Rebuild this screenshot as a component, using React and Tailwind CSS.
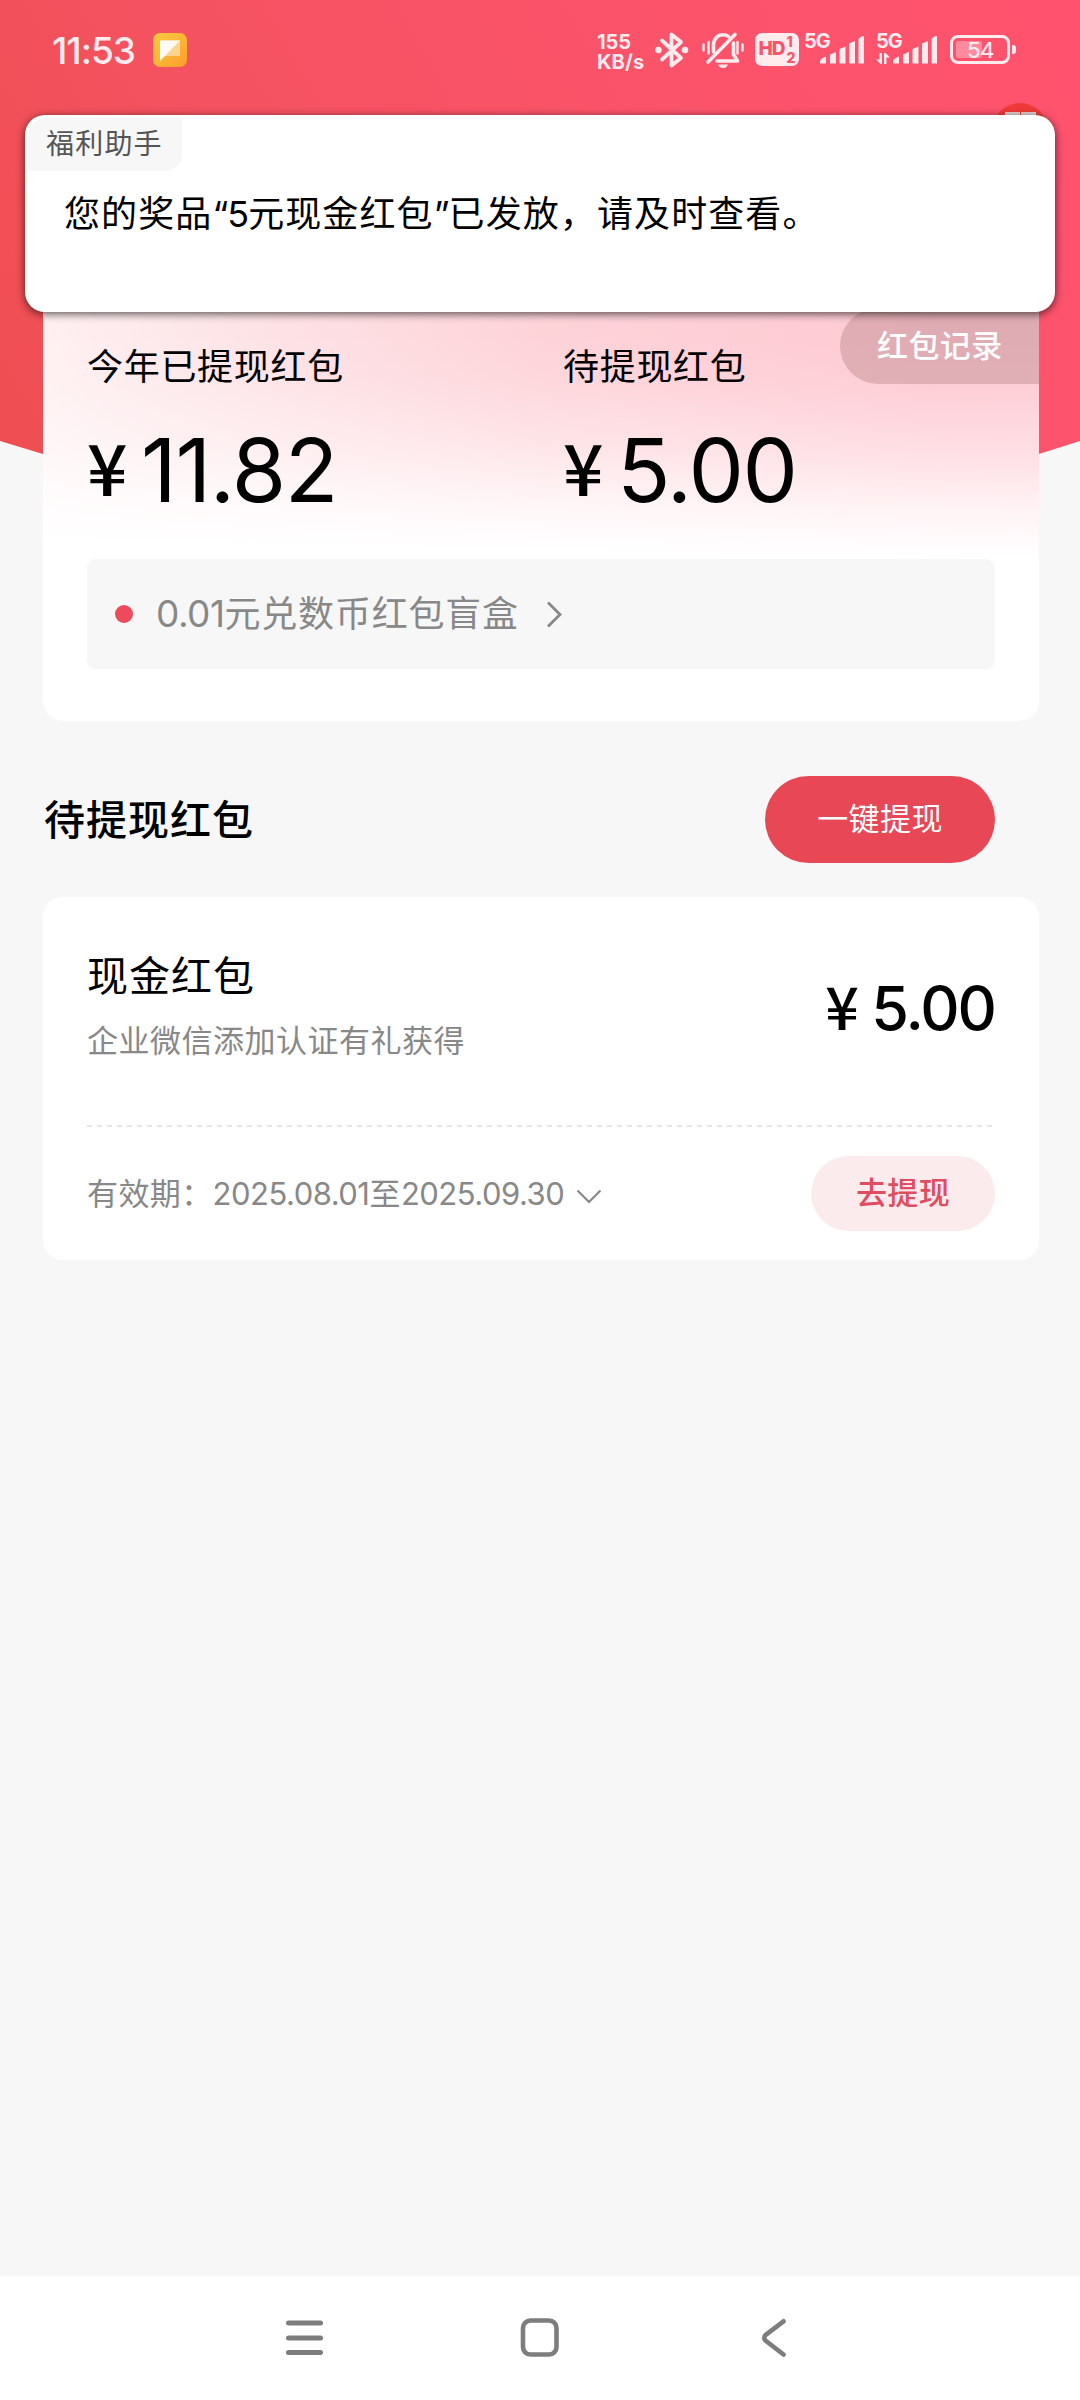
import React from 'react';

const BluetoothIcon = () => (
  <svg className="ml-[10px] mt-[31px] h-[38px] w-[34px] shrink-0" viewBox="0 0 34 38" fill="none">
    <path d="M7 9.5L26 27L16.5 34.5V3.5L26 11L7 28.5" stroke="#ffeaee" strokeWidth="3.8" strokeLinejoin="round" strokeLinecap="round" />
    <circle cx="3.4" cy="19" r="3.3" fill="#ffeaee" />
    <circle cx="30" cy="19" r="3.3" fill="#ffeaee" />
  </svg>
);

const MutedBellIcon = () => (
  <svg className="ml-[12px] mt-[31px] h-[38px] w-[44px] shrink-0" viewBox="0 0 44 38" fill="none" stroke="#ffeaee" strokeLinecap="round">
    <path d="M2.5 13.5V19.5M7.5 11V22.5M36.5 11V22.5M41.5 13.5V19.5" strokeWidth="2.4" />
    <path d="M7 31L34 3.5" strokeWidth="3.6" />
    <path d="M12.5 21V14C12.5 8 16.5 3.8 22 3.8C24.2 3.8 26 4.4 27.5 5.5" strokeWidth="3.6" />
    <path d="M32.5 12V23.5L36.5 30H16" strokeWidth="3.6" strokeLinejoin="round" />
    <path d="M17 33.5H27C26 36 24.5 37 22 37C19.5 37 18 36 17 33.5Z" fill="#ffeaee" stroke="none" />
  </svg>
);

const SignalBars = () => (
  <svg className="h-[30px] w-[45px]" viewBox="0 0 45 30" fill="#ffeaee">
    <path d="M0 28.5V26C0 24.5 4 22 6 21.5V28.5Z" />
    <path d="M10 28.5V19.5L16 17V28.5Z" />
    <path d="M19.5 28.5V14L25.5 11.5V28.5Z" />
    <path d="M29 28.5V8.5L35 6V28.5Z" />
    <path d="M38.5 28.5V4.5C39 2.5 42 1 44 1V28.5Z" />
  </svg>
);

const StatusBar = () => (
  <div className="flex h-[110px] items-start pl-[52px] text-[#ffeaee]">
    <div className="mt-[31px] w-[101px] text-[37px] font-medium leading-[40px] tracking-[-1px]">11:53</div>
    <svg className="mt-[33px] h-[34px] w-[34px]" viewBox="0 0 34 34">
      <defs>
        <linearGradient id="note" x1="0" y1="0" x2="1" y2="1">
          <stop offset="0" stopColor="#fbc93f" />
          <stop offset="0.5" stopColor="#fcb637" />
          <stop offset="1" stopColor="#fd9c2b" />
        </linearGradient>
      </defs>
      <rect width="34" height="34" rx="7" fill="url(#note)" />
      <path d="M7 7.5H27V23H12L7 27Z" fill="#fdd390" />
      <path d="M7 7.5H27L7 28Z" fill="#fffaf2" />
    </svg>
    <div className="ml-[410px] mt-[32px] w-[48px] whitespace-nowrap text-[20px] font-bold leading-[20px]">
      <div className="tracking-[-0.1px]">155</div>
      <div className="tracking-[0.2px]">KB/s</div>
    </div>
    <BluetoothIcon />
    <MutedBellIcon />
    <div className="ml-[10px] mt-[33px] flex h-[33px] w-[44px] shrink-0 items-center justify-center rounded-[7px] bg-[#ffeaee] text-[#f8546a]">
      <span className="text-[19px] font-extrabold tracking-[-1px]">HD</span>
      <span className="ml-[2px] text-[14px] font-extrabold leading-[16px]">
        1<br />2
      </span>
    </div>
    <div className="ml-[5px] mt-[33px] flex w-[59px] shrink-0">
      <span className="w-[16px] text-[20px] font-bold leading-[17px] tracking-[-1px]">5G</span>
      <div className="mt-[2px]"><SignalBars /></div>
    </div>
    <div className="ml-[13px] mt-[33px] flex w-[61px] shrink-0">
      <div className="w-[17px]">
        <div className="text-[20px] font-bold leading-[17px] tracking-[-1px]">5G</div>
        <svg className="mt-[3px] h-[12px] w-[14px]" viewBox="0 0 14 12" fill="#ffeaee">
          <path d="M3.5 0H6V11H4.5L0 6.5H3.5Z" />
          <path d="M8 0H9.5L14 4.5H10.5V11H8Z" />
        </svg>
      </div>
      <div className="mt-[2px]"><SignalBars /></div>
    </div>
    <div className="ml-[13px] mt-[35px] flex shrink-0 items-center">
      <div className="flex h-[29px] w-[60px] items-center rounded-[8px] border-[3px] border-[#ffeaee] p-[3px]">
        <div className="flex h-full w-[26px] items-center rounded-[2px] bg-[#ff8a9c]">
          <span className="ml-[11px] text-[22px] font-medium leading-[18px] tracking-[-0.7px]">54</span>
        </div>
      </div>
      <div className="ml-[2px] h-[9px] w-[4px] rounded-r-[3px] bg-[#ffeaee]" />
    </div>
  </div>
);

const Toast = () => (
  <div className="absolute left-[25px] top-[115px] z-20 h-[197px] w-[1030px] rounded-[20px] bg-white pt-[3px] shadow-[0_2px_9px_rgba(0,0,0,0.65)]">
    <div className="ml-[3px] flex h-[53px] w-[154px] items-center rounded-br-[16px] rounded-tl-[18px] bg-[#f7f7f7] pb-[1px] pl-[18px] text-[28px] tracking-[1.2px] text-[#555]">
      福利助手
    </div>
    <div className="ml-[39px] mt-[18px] whitespace-nowrap text-[36px] leading-[50px] tracking-[1.1px] text-black">
      您的奖品<span className="tracking-[-1px]">“5</span>元现金红包<span className="tracking-[-1px]">”</span>已发放，请及时查看。
    </div>
  </div>
);

const Balance = ({ label, children }) => (
  <div>
    <div className="whitespace-nowrap text-[36px] leading-[40px] tracking-[0.7px]">{label}</div>
    <div className="mt-[47px] flex h-[88px] items-start">{children}</div>
  </div>
);

const Yen = ({ className }) => (
  <span className={`font-['Noto_Sans_CJK_SC',sans-serif] font-medium ${className}`}>¥</span>
);

const SummaryCard = () => (
  <div className="relative ml-[43px] h-[431px] w-[996px] overflow-hidden rounded-[20px] bg-[linear-gradient(181deg,rgba(255,255,255,0)_12%,rgba(255,255,255,0.1)_22%,rgba(255,255,255,0.4)_36%,rgba(255,255,255,0.8)_50%,#fff_60%),linear-gradient(97deg,#fff0f1_0%,#fde8ea_12%,#fdd3d8_48%,#fec9d2_85%)] pl-[44px] pt-[57px]">
    <div className="absolute right-0 top-[18px] flex h-[76px] w-[199px] items-center rounded-l-full bg-[#bc8a8d]/45 pl-[37px] text-[31px] font-medium tracking-[0.4px] text-white">
      红包记录
    </div>
    <div className="flex">
      <div className="w-[476px]">
        <Balance label="今年已提现红包">
          <Yen className="w-[54px] text-[71px] leading-[63px]" />
          <span className="text-[88px] leading-[72px] tracking-[-1.4px]">11.82</span>
        </Balance>
      </div>
      <Balance label="待提现红包">
        <Yen className="w-[54px] text-[71px] leading-[63px]" />
        <span className="text-[88px] leading-[72px] tracking-[-1.4px]">5.00</span>
      </Balance>
    </div>
    <div className="mt-[37px] flex h-[110px] w-[908px] items-center rounded-[9px] bg-[#f7f7f7] pl-[28px] text-[#888]">
      <span className="h-[18px] w-[18px] rounded-full bg-[#ee4a5b]" />
      <span className="ml-[23px] whitespace-nowrap text-[36px] leading-[40px] tracking-[0.8px]">
        <span className="text-[37px] tracking-[-0.5px]">0.01</span>元兑数币红包盲盒
      </span>
      <svg className="ml-[27px] mt-[1px] h-[27px] w-[16px]" viewBox="0 0 16 27" fill="none">
        <path d="M2 1.5L14 13.5L2 25.5" stroke="#888" strokeWidth="2.8" />
      </svg>
    </div>
  </div>
);

const PacketCard = () => (
  <div className="mx-[43px] mt-[34px] h-[363px] w-[996px] rounded-[20px] bg-white px-[44px] pt-[54px]">
    <div className="flex h-[174px] justify-between">
      <div>
        <div className="text-[41px] leading-[50px] tracking-[1px] text-black">现金红包</div>
        <div className="mt-[20px] text-[31px] leading-[40px] tracking-[0.5px] text-[#888]">企业微信添加认证有礼获得</div>
      </div>
      <div className="mt-[32px] flex h-[50px] items-start">
        <Yen className="w-[46px] text-[59px] leading-[43px]" />
        <span className="text-[61px] font-medium leading-[50px] tracking-[-2px]">5.00</span>
      </div>
    </div>
    <div className="h-[2px] bg-[repeating-linear-gradient(90deg,#e6e6e6_0_5px,transparent_5px_10px)]" />
    <div className="flex items-center pt-[29px]">
      <span className="whitespace-nowrap text-[31px] leading-[40px] tracking-[0.4px] text-[#888]">
        有效期：<span className="tracking-[-0.5px]">2025.08.01</span>至<span className="tracking-[-0.5px]">2025.09.30</span>
      </span>
      <svg className="ml-[12px] mt-[5px] h-[15px] w-[26px]" viewBox="0 0 26 15" fill="none">
        <path d="M1.5 1.5L13 13L24.5 1.5" stroke="#888" strokeWidth="2.2" />
      </svg>
      <button className="ml-auto h-[75px] w-[184px] rounded-full bg-[#fcebed] text-[31px] font-medium tracking-[0.4px] text-[#e04c60]">
        去提现
      </button>
    </div>
  </div>
);

const NavBar = () => (
  <div className="mt-auto flex h-[124px] items-start bg-white pl-[286px] pt-[39px]">
    <svg className="h-[46px] w-[38px]" viewBox="0 0 38 46" fill="#7d7d7d">
      <rect x="0" y="5.5" width="37" height="5" rx="2.5" />
      <rect x="0" y="20.5" width="37" height="5" rx="2.5" />
      <rect x="0" y="35" width="37" height="5" rx="2.5" />
    </svg>
    <svg className="ml-[196px] h-[46px] w-[40px]" viewBox="0 0 40 46" fill="none">
      <rect x="3" y="5.5" width="33.5" height="34" rx="7.5" stroke="#7d7d7d" strokeWidth="4.6" />
    </svg>
    <svg className="ml-[201px] h-[46px] w-[26px]" viewBox="0 0 26 46" fill="none">
      <path d="M22.5 6.3L4.8 19.8Q1.6 22.8 4.8 25.8L22.5 39.5" stroke="#7d7d7d" strokeWidth="4.6" strokeLinecap="round" />
    </svg>
  </div>
);

const App = () => {
  return (
    <div className="relative h-[2400px] w-[1080px] overflow-hidden bg-[#f7f7f7] font-[Inter,'Noto_Sans_CJK_SC',sans-serif] text-black">
      {/* Red backdrop that tapers toward the bottom */}
      <div className="absolute inset-x-0 top-0 h-[520px] bg-[linear-gradient(60deg,#ee4e50_0%,#f45260_33%,#fb536a_66%,#ff526e_100%)] [clip-path:polygon(0_0,100%_0,100%_441px,1039px_454px,540px_520px,43px_454px,0_441px)]" />

      {/* Close badge peeking out behind the toast */}
      <div className="absolute left-[992px] top-[103px] flex h-[56px] w-[56px] justify-center gap-[1px] rounded-full bg-[#ef3a38] pt-[9px]">
        <span className="h-[10px] w-[15px] bg-[#e3cfcd]" />
        <span className="h-[10px] w-[15px] bg-[#e3cfcd]" />
      </div>
      <Toast />

      <div className="relative flex h-full flex-col">
        <StatusBar />
        <div className="mt-[180px]">
          <SummaryCard />
        </div>
        <div className="mt-[55px] flex items-center justify-between pl-[44px] pr-[85px]">
          <h2 className="text-[41px] font-medium leading-[50px] tracking-[1px]">待提现红包</h2>
          <button className="h-[87px] w-[230px] rounded-full bg-[#e84855] text-[31px] tracking-[0.4px] text-white">一键提现</button>
        </div>
        <PacketCard />
        <NavBar />
      </div>
    </div>
  );
};

export default App;
